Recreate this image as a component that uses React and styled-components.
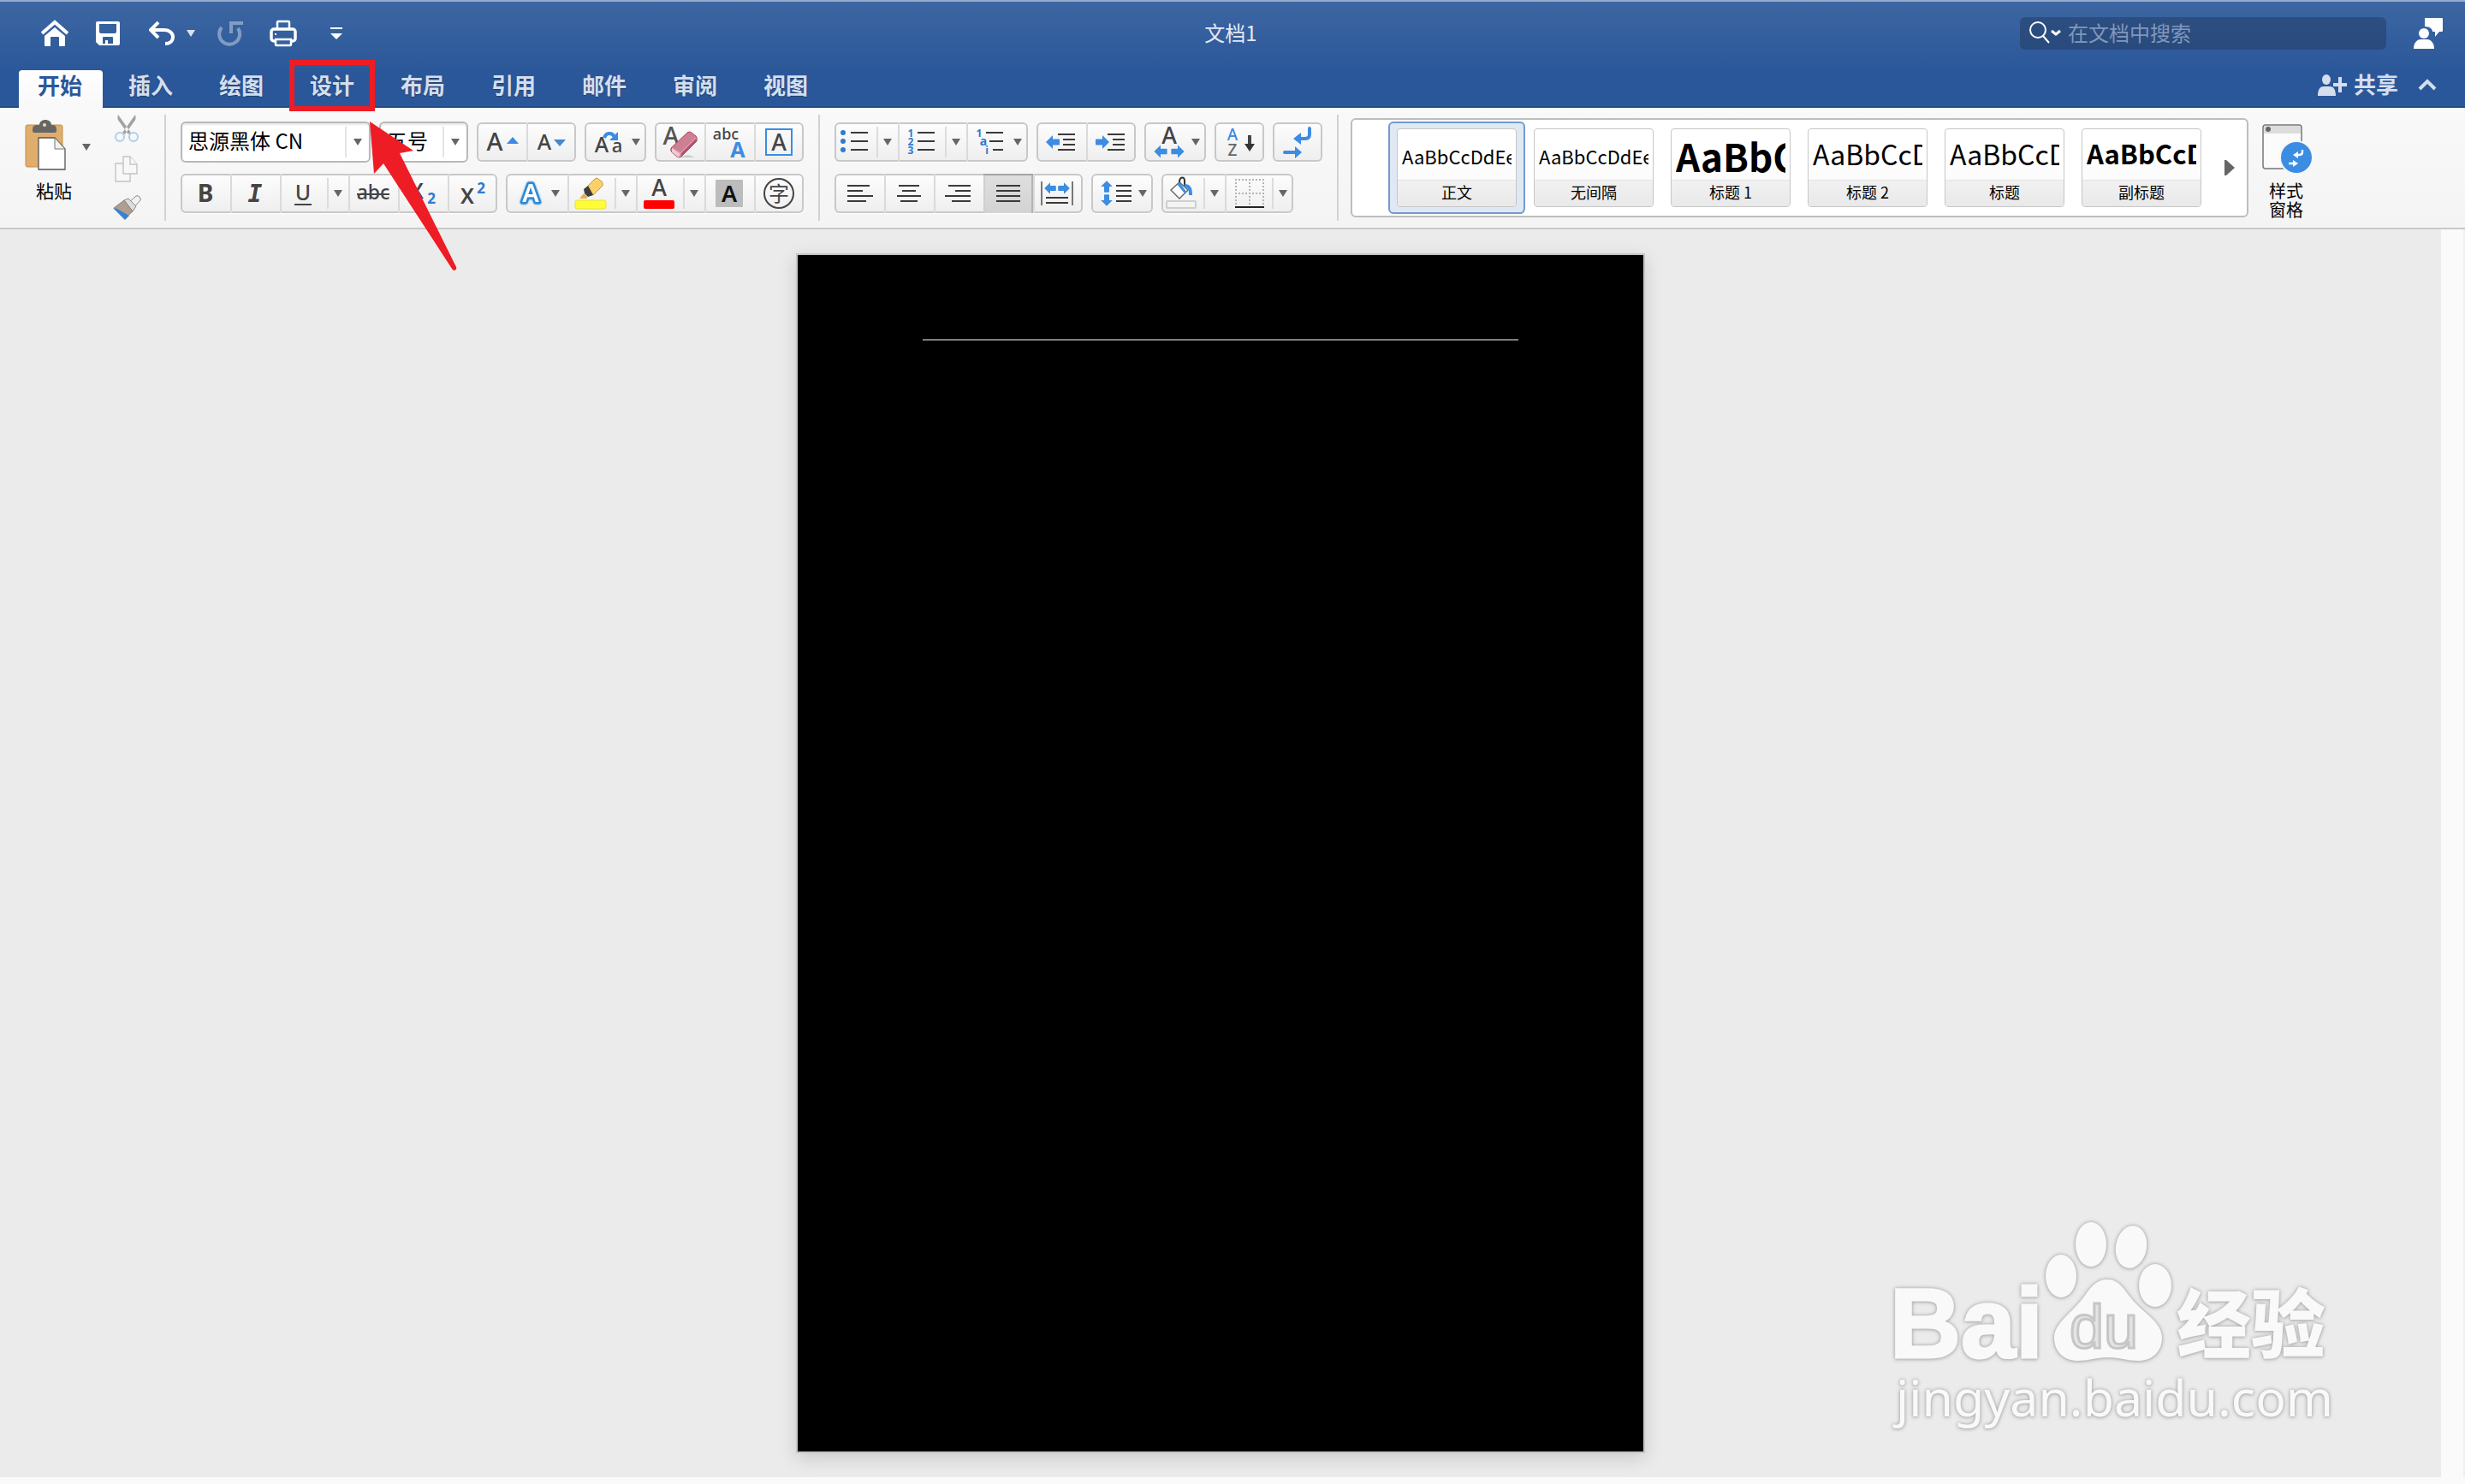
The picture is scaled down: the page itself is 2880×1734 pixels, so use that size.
import React, { useState } from 'react';
import styled, { createGlobalStyle, css } from 'styled-components';

const BLUE = '#3c8ce2';
const INK = '#444';

const GlobalStyle = createGlobalStyle`
  * {
    box-sizing: border-box;
  }

  body {
    margin: 0;
    font-family: "Noto Sans CJK SC", sans-serif;
    color: #000;
  }

  button, input, select {
    margin: 0;
    padding: 0;
    border: 0;
    background: none;
    font: inherit;
    color: inherit;
  }

  svg {
    display: block;
    flex: none;
  }
`;

const AppWrapper = styled.div`
  position: relative;
  display: flex;
  flex-direction: column;
  min-height: 100vh;
  overflow: hidden;
  background: #fafafa;
`;

const Header = styled.header`
  height: 126px;
  background: linear-gradient(#3d66a2, #2a5799 70%);
  border-top: 2px solid #96abcd;
  border-bottom: 2px solid #254b82;
`;

const TitleBar = styled.div`
  display: grid;
  grid-template-columns: 1fr auto 1fr;
  align-items: center;
  height: 78px;
  padding: 0 24px 4px 20px;

  .title {
    padding-bottom: 4px;
    font-size: 24px;
    color: #e2e8f3;
  }
`;

const QuickAccess = styled.div`
  display: flex;
  align-items: center;
  padding-left: 20px;
`;

const QuickButton = styled.button`
  display: flex;
  justify-content: center;
  align-items: center;
  width: ${(p) => p.$w}px;
  height: 48px;
  margin-right: ${(p) => p.$gap || 0}px;
  opacity: ${(p) => (p.disabled ? 0.38 : 1)};
`;

const TitleRight = styled.div`
  display: flex;
  justify-content: flex-end;
  align-items: center;
  gap: 30px;
`;

const SearchBox = styled.label`
  display: flex;
  align-items: center;
  width: 428px;
  height: 38px;
  padding-left: 10px;
  border-radius: 6px;
  background: linear-gradient(#2d4e80, #284a7d);

  input {
    flex: 1;
    min-width: 0;
    padding: 0 0 2px 8px;
    font-size: 24px;
    line-height: 34px;
    outline: none;
  }

  input::placeholder {
    color: #8197bb;
    opacity: 1;
  }
`;

const TabBar = styled.div`
  display: flex;
  height: 44px;
  padding: 0 32px 0 22px;
  margin-top: 2px;
`;

const Tabs = styled.nav`
  display: flex;
  gap: 8px;
`;

const TabSlot = styled.div`
  position: relative;
`;

const Tab = styled.button`
  width: 98px;
  height: 44px;
  padding: 0 2px 10px 0;
  border-radius: 4px 4px 0 0;
  font-size: 26px;
  line-height: 34px;
  font-weight: 700;
  color: #d4deed;
  text-shadow: 0 1px 1px rgba(0, 0, 0, .3);

  ${(p) => p.$active && css`
    background: linear-gradient(#fff, #f8f8f8);
    color: #2b579a;
    text-shadow: none;
  `}
`;

const Callout = styled.div`
  position: absolute;
  z-index: 2;
  top: -12px;
  left: -2px;
  width: 100px;
  height: 60px;
  border: 6px solid #ee1c24;
  pointer-events: none;

  svg {
    position: absolute;
    top: 66px;
    left: 88px;
  }
`;

const TabActions = styled.div`
  display: flex;
  align-items: center;
  gap: 22px;
  margin-left: auto;
  padding-bottom: 10px;
  color: #d4deed;
`;

const ShareButton = styled.button`
  display: flex;
  align-items: center;
  gap: 8px;
  font-size: 26px;
  line-height: 34px;
  font-weight: 700;

  span {
    padding-bottom: 2px;
  }
`;

const Ribbon = styled.section`
  display: flex;
  height: 142px;
  padding: 8px 0;
  background: linear-gradient(#f9f9f9, #f4f4f4);
  border-bottom: 2px solid #c9c9c9;
`;

const Divider = styled.div`
  width: 2px;
  height: 124px;
  background: #d2d2d2;
`;

const Clipboard = styled.div`
  display: flex;
  width: 192px;
  padding-left: 28px;

  .paste {
    display: flex;
    flex-direction: column;
    align-items: center;
    gap: 2px;
    width: 80px;
    padding: 4px 0 0;
    align-self: flex-start;
    font-size: 21px;
    line-height: 36px;
  }

  .paste span {
    align-self: flex-start;
    margin-left: 14px;
  }

  .side {
    display: flex;
    flex-direction: column;
    justify-content: space-between;
    align-items: center;
    width: 36px;
    margin-left: 22px;
  }
`;

const Section = styled.div`
  display: flex;
  flex-direction: column;
  gap: 13px;
  padding: 8px 17px 0;
`;

const Row = styled.div`
  display: flex;
  align-items: center;
  gap: 10px;
  height: ${(p) => p.$h || 46}px;
`;

const Group = styled.div`
  display: flex;
  height: 46px;
  border-radius: 6px;
  background: linear-gradient(#fdfdfd, #eee);
  box-shadow: inset 0 0 0 2px #c8c8c8, 0 1px 1px #fff;
`;

const Tool = styled.button`
  width: ${(p) => p.$w}px;
  height: 46px;

  & + & {
    box-shadow: inset 2px 0 0 #dadada;
  }

  && {
    ${(p) => p.$active && css`
      background: linear-gradient(#dfdfdf, #d3d3d3);
      box-shadow: inset 0 2px 0 #a3a3a3, inset -2px 0 0 #b4b4b4, inset 2px 0 0 #cfcfcf;
    `}
  }
`;

const Combo = styled.div`
  display: grid;
  width: ${(p) => p.$w}px;
  height: 48px;
  border: 2px solid #b9b9b9;
  border-radius: 6px;
  background: #fff;
  box-shadow: inset 0 2px 2px #e8e8e8;

  select, svg {
    grid-area: 1 / 1;
  }

  select {
    width: 100%;
    height: 44px;
    padding: 0 0 6px 7px;
    appearance: none;
    outline: none;
    font-size: 24px;
  }

  svg {
    justify-self: end;
    pointer-events: none;
  }
`;

const Gallery = styled.div`
  display: flex;
  align-items: center;
  height: 116px;
  margin: 4px 12px 0 14px;
  padding-left: 42px;
  border: 2px solid #bdbdbd;
  border-radius: 6px;
  background: #fff;

  .next {
    width: 43px;
    height: 108px;
    padding-left: 17px;
  }
`;

const StyleItem = styled.button`
  width: 160px;
  height: 108px;
  padding: 6px 8px;
  border: 2px solid ${(p) => (p.$active ? '#7399ce' : 'transparent')};
  border-radius: 6px;
  background: ${(p) => (p.$active ? '#dfe8f3' : 'none')};
`;

const StyleCard = styled.span`
  display: flex;
  flex-direction: column;
  height: 92px;
  border: 1px solid #c6c6c6;
  border-radius: 4px;
  background: linear-gradient(#fff, #fff 30%, #f8f8f8);
  overflow: hidden;

  .preview {
    height: 60px;
    margin: 0 5px;
    overflow: hidden;
    text-align: left;
    white-space: nowrap;
    font-size: ${(p) => p.$size}px;
    font-weight: ${(p) => p.$weight};
    line-height: ${(p) => p.$line}px;
  }

  .name {
    height: 31px;
    border-top: 1px solid #e4e4e4;
    background: linear-gradient(#f1f1f1, #e9e9e9);
    font-size: 18px;
    line-height: 26px;
  }
`;

const PaneButton = styled.button`
  display: flex;
  flex-direction: column;
  align-items: center;
  align-self: flex-start;
  gap: 8px;
  width: 64px;
  padding-top: 10px;
  font-size: 20px;
  line-height: 22px;
`;

const Workspace = styled.main`
  display: flex;
  flex: 1;
  margin-bottom: 8px;

  .canvas {
    display: flex;
    flex: 1;
    justify-content: center;
    align-items: flex-start;
    padding: 28px 0;
    background: #ebebeb;
  }

  .track {
    width: 28px;
    border-right: 2px solid #efefef;
    background: #fafafa;
  }
`;

const Sheet = styled.article`
  width: 992px;
  height: 1402px;
  padding: 98px 146px;
  border: 2px solid #c6c6c6;
  background: #000;
  box-shadow: 0 6px 20px rgba(0, 0, 0, .14);

  hr {
    height: 2px;
    margin: 0;
    border: 0;
    background: #7f7f7f;
  }
`;

const Watermark = styled.svg`
  position: absolute;
  right: 150px;
  bottom: 44px;
  pointer-events: none;
  filter: drop-shadow(0 0 2px #a8a8a8) drop-shadow(0 1px 1px #c8c8c8);
`;

// Drawn on a canvas of the same size as its button, so the letters sit on a common grid
const Art = ({ w = 58, h = 46, children }) => (
  <svg width={w} height={h} viewBox={`0 0 ${w} ${h}`} aria-hidden="true">{children}</svg>
);

const Ch = ({ x, y, size = 27, fill = INK, weight = 500, family = 'Noto Sans', anchor = 'middle', ...rest }) => (
  <text x={x} y={y} fontSize={size} fill={fill} fontWeight={weight} fontFamily={`"${family}", "Noto Sans CJK SC", sans-serif`} textAnchor={anchor} {...rest} />
);

const Caret = ({ x, y = 19, fill = '#666' }) => <path d={`M${x - 5} ${y}h10l-5 8z`} fill={fill} />;

const Split = ({ x }) => <path d={`M${x + 1} 5v36`} stroke="#dcdcdc" strokeWidth="2" />;

const Lines = ({ rows }) => (
  <g stroke="#3a3a3a" strokeWidth="2">
    {rows.map(([a, b, y]) => <path key={y} d={`M${a} ${y}H${b}`} />)}
  </g>
);

const BlockArrow = ({ x, y, turn = 0, s = 1 }) => (
  <path
    d="M-8 0L0 -8V-3.5H7Q8 -3.5 8 -2.5V2.5Q8 3.5 7 3.5H0V8Z"
    transform={`translate(${x} ${y}) rotate(${turn}) scale(${s})`}
    fill={BLUE}
  />
);

const fontSizeTools = [
  { label: '增大字号', w: 58, art: <><Ch x={21} y={33} size={29}>A</Ch><path d="M35 25l7-8 7 8z" fill={BLUE} /></> },
  { label: '减小字号', w: 58, art: <><Ch x={21} y={32} size={25}>A</Ch><path d="M32 20h14l-7 8z" fill="#4b86cf" /></> },
];

const caseTools = [
  {
    label: '更改大小写',
    w: 72,
    art: (
      <>
        <Ch x={20} y={35} size={25}>A</Ch>
        <Ch x={38} y={35} size={22}>a</Ch>
        <path d="M23 18c2-6 9-7 12-1" fill="none" stroke={BLUE} strokeWidth="4" />
        <path d="M39 11v10H29z" fill={BLUE} />
        <Caret x={60} />
      </>
    ),
  },
];

const clearTools = [
  {
    label: '清除格式',
    w: 58,
    art: (
      <>
        <Ch x={19} y={26} size={29} fill="#555">A</Ch>
        <path d="M26 41h21l-8-3z" fill="#ccc" />
        <path d="M19 30L38 12q2-2 5 0l5 4q2 2 1 6L31 40q-3 2-5 0l-6-5q-2-2-1-5z" fill="#cf7f93" stroke="#a8485f" />
        <path d="M20 30l10 7-2 4-8-6z" fill="#eccad2" />
        <path d="M31 36L48 19v4L31 40z" fill="#b5546c" />
        <path d="M20 30l10 6 18-18" fill="none" stroke="#e6b2bf" />
      </>
    ),
  },
  { label: '拼音指南', w: 58, art: <><Ch x={25} y={20} size={18}>abc</Ch><Ch x={39} y={41} size={25} weight={700} fill={BLUE}>A</Ch></> },
  { label: '字符边框', w: 58, art: <><rect x="14" y="8" width="30" height="30" fill="none" stroke={BLUE} strokeWidth="2" /><Ch x={29} y={33}>A</Ch></> },
];

const styleTools = [
  { label: '加粗', w: 58, art: <Ch x={29} y={33} size={28} weight={700}>B</Ch> },
  { label: '倾斜', w: 58, art: <Ch x={29} y={33} size={28} family="DejaVu Sans Mono" fontStyle="italic" weight={700}>I</Ch> },
  { label: '下划线', w: 80, art: <><Ch x={27} y={31} size={25}>U</Ch><path d="M17 36h20" stroke={INK} strokeWidth="2" /><Split x={55} /><Caret x={68} /></> },
  { label: '删除线', w: 58, art: <><Ch x={29} y={30} size={23}>abc</Ch><path d="M10 24h38" stroke={INK} strokeWidth="2" /></> },
  { label: '下标', w: 58, art: <><Ch x={22} y={29} size={25} weight={600}>X</Ch><Ch x={39} y={35} size={17} weight={700} fill="#2b7cd3">2</Ch></> },
  { label: '上标', w: 58, art: <><Ch x={23} y={35} size={25} weight={600}>X</Ch><Ch x={39} y={23} size={17} weight={700} fill="#2b7cd3">2</Ch></> },
];

const colorTools = [
  {
    label: '文本效果',
    w: 72,
    art: (
      <>
        <g style={{ filter: 'drop-shadow(0 0 1px #2b8ad6)' }}>
          <Ch x={29} y={33} size={29} weight={600} fill="#fff" stroke="#2b8ad6" strokeWidth="5" strokeLinejoin="round" paintOrder="stroke">A</Ch>
        </g>
        <Caret x={58} />
      </>
    ),
  },
  {
    label: '突出显示',
    w: 80,
    art: (
      <>
        <path d="M24 14l8-8q2-2 4 0l4 3q2 2 1 5L30 25z" fill="#fdd169" stroke="#c79a3a" />
        <path d="M24 14l-5 4 1 5 4 4 6-2z" fill="#3d3d3d" />
        <path d="M19 23l-5 6h8l2-2z" fill="#e6b34a" />
        <rect x="9" y="31" width="36" height="10" rx="2" fill="#fffd38" stroke="#e5e035" />
        <Split x={55} />
        <Caret x={68} />
      </>
    ),
  },
  { label: '字体颜色', w: 80, art: <><Ch x={27} y={26}>A</Ch><rect x="9" y="31" width="36" height="10" rx="2" fill="#f00" /><Split x={55} /><Caret x={68} /></> },
  { label: '字符底纹', w: 58, art: <><rect x="13" y="7" width="32" height="32" rx="1" fill="#bcbcbc" /><Ch x={29} y={33} weight={600} fill="#111">A</Ch></> },
  { label: '带圈字符', w: 58, art: <><circle cx="29" cy="23" r="17" fill="none" stroke={INK} strokeWidth="2" /><Ch x={29} y={32} size={24} family="Noto Sans CJK SC" weight={400}>字</Ch></> },
];

const listTools = [
  {
    label: '项目符号',
    w: 74,
    art: (
      <>
        {[12, 22, 32].map((y) => <circle key={y} cx="10" cy={y} r="3" fill="#2b7cd3" />)}
        <Lines rows={[[19, 39, 12], [19, 39, 22], [19, 39, 32]]} />
        <Split x={49} />
        <Caret x={62} />
      </>
    ),
  },
  {
    label: '编号',
    w: 80,
    art: (
      <>
        {[1, 2, 3].map((n) => <Ch key={n} x={15} y={7 + n * 10} size={12} weight={700} fill="#2b7cd3">{n}</Ch>)}
        <Lines rows={[[23, 43, 12], [23, 43, 22], [23, 43, 32]]} />
        <Split x={55} />
        <Caret x={68} />
      </>
    ),
  },
  {
    label: '多级列表',
    w: 72,
    art: (
      <>
        <Ch x={15} y={17} size={12} weight={700} fill="#2b7cd3">1</Ch>
        <Ch x={20} y={27} size={14} weight={700} fill="#2b7cd3">a</Ch>
        <Ch x={24} y={37} size={12} weight={700} fill="#2b7cd3">i</Ch>
        <Lines rows={[[23, 43, 12], [27, 43, 22], [31, 43, 32]]} />
        <Caret x={60} />
      </>
    ),
  },
];

const indentTools = [
  { label: '减少缩进', w: 58, art: <><Lines rows={[[25, 45, 14], [31, 45, 20], [31, 45, 26], [25, 45, 32]]} /><BlockArrow x={19} y={23} /></> },
  { label: '增加缩进', w: 58, art: <><Lines rows={[[25, 45, 14], [31, 45, 20], [31, 45, 26], [25, 45, 32]]} /><BlockArrow x={19} y={23} turn={180} /></> },
];

const asianTools = [
  { label: '中文版式', w: 72, art: <><Ch x={29} y={25}>A</Ch><BlockArrow x={19} y={34} s={0.95} /><BlockArrow x={39} y={34} s={0.95} turn={180} /><Caret x={60} /></> },
];

const sortTools = [
  { label: '排序', w: 58, art: <><Ch x={21} y={21} size={19} fill={BLUE}>A</Ch><Ch x={21} y={39} size={19} fill="#666">Z</Ch><path d="M41 15v14" stroke={INK} strokeWidth="4" /><path d="M35 25h12l-6 9z" fill="#333" /></> },
];

const markTools = [
  {
    label: '显示编辑标记',
    w: 58,
    art: (
      <>
        <path d="M43 7v7q0 5-5 5h-8M14 35h14" fill="none" stroke={BLUE} strokeWidth="4" strokeLinecap="round" />
        <path d="M24 19l9-7v14zM34 35l-8-7v14z" fill={BLUE} />
      </>
    ),
  },
];

const alignTools = [
  { label: '左对齐', w: 58, art: <Lines rows={[[15, 41, 14], [15, 33, 20], [15, 45, 26], [15, 37, 32]]} /> },
  { label: '居中', w: 58, art: <Lines rows={[[17, 41, 14], [21, 37, 20], [15, 43, 26], [19, 39, 32]]} /> },
  { label: '右对齐', w: 58, art: <Lines rows={[[17, 43, 14], [25, 43, 20], [13, 43, 26], [21, 43, 32]]} /> },
  { label: '两端对齐', w: 58, active: true, art: <Lines rows={[[15, 43, 14], [15, 43, 20], [15, 43, 26], [15, 43, 32]]} /> },
  {
    label: '分散对齐',
    w: 58,
    art: (
      <>
        <path d="M10 9v28M46 9v28" stroke="#777" strokeWidth="2" />
        <BlockArrow x={20} y={17} s={0.85} />
        <BlockArrow x={36} y={17} s={0.85} turn={180} />
        <Lines rows={[[15, 41, 28], [15, 41, 34]]} />
      </>
    ),
  },
];

const spacingTools = [
  {
    label: '行距',
    w: 72,
    art: (
      <>
        <BlockArrow x={18} y={15} s={0.85} turn={90} />
        <BlockArrow x={18} y={31} s={0.85} turn={270} />
        <Lines rows={[[29, 47, 14], [29, 47, 20], [29, 47, 26], [29, 47, 32]]} />
        <Caret x={60} />
      </>
    ),
  },
];

const borderTools = [
  {
    label: '底纹',
    w: 74,
    art: (
      <>
        <path d="M11 19l10-9 10 9-10 10z" fill="#fff" stroke="#666" strokeWidth="1.4" />
        <path d="M18 12l9 11 2-2-8-11z" fill={BLUE} />
        <path d="M21 10c0-7 6-7 6-2v6" fill="none" stroke="#333" strokeWidth="2" />
        <path d="M27 14c6 0 7 4 7 11" fill="none" stroke={BLUE} strokeWidth="4" />
        <rect x="6" y="32" width="34" height="8" rx="1" fill="#f4f4f4" stroke="#cfcfcf" strokeWidth="2" />
        <Split x={49} />
        <Caret x={62} />
      </>
    ),
  },
  {
    label: '边框',
    w: 80,
    art: (
      <>
        <path d="M12 7h34M12 23h34M13 6v30M29 6v30M45 6v30" stroke="#b5b5b5" strokeWidth="2" strokeDasharray="2 2" />
        <path d="M12 39h34" stroke="#222" strokeWidth="2" />
        <Split x={55} />
        <Caret x={68} />
      </>
    ),
  },
];

const ToolGroup = ({ tools }) => (
  <Group>
    {tools.map(({ label, w, active, art }) => (
      <Tool key={label} $w={w} $active={active} aria-label={label}>
        <Art w={w}>{art}</Art>
      </Tool>
    ))}
  </Group>
);

const Picker = ({ label, width, options }) => (
  <Combo $w={width}>
    <select aria-label={label}>
      {options.map((option) => <option key={option}>{option}</option>)}
    </select>
    <Art w={28} h={44}>
      <path d="M1 4v36" stroke="#e4e4e4" strokeWidth="2" />
      <Caret x={15} y={18} />
    </Art>
  </Combo>
);

const tabs = ['开始', '插入', '绘图', '设计', '布局', '引用', '邮件', '审阅', '视图'];

const textStyles = [
  { name: '正文', size: 22, weight: 400, line: 62 },
  { name: '无间隔', size: 22, weight: 400, line: 62 },
  { name: '标题 1', size: 44, weight: 700, line: 62 },
  { name: '标题 2', size: 32, weight: 400, line: 56 },
  { name: '标题', size: 32, weight: 400, line: 56 },
  { name: '副标题', size: 31, weight: 700, line: 56 },
];

const TopBar = () => (
  <TitleBar>
    <QuickAccess>
      <QuickButton $w={48} $gap={14} aria-label="主页">
        <Art w={32} h={32}>
          <path d="M1 16L16 3l15 13" fill="none" stroke="#fff" strokeWidth="4" />
          <path d="M4 19L16 9l12 10v11q0 1-1 1h-6V21q0-1-1-1h-8q-1 0-1 1v10H5q-1 0-1-1z" fill="#fff" />
        </Art>
      </QuickButton>
      <QuickButton $w={48} $gap={14} aria-label="保存">
        <Art w={28} h={28}>
          <path fillRule="evenodd" d="M2 0h24q2 0 2 2v24q0 2-2 2H4l-4-4V2q0-2 2-2zM4 3v9q0 2 2 2h16q2 0 2-2V3zM8 19q0-1 1-1h10q1 0 1 1v7h-6v-4h-3v4H8z" fill="#fff" />
        </Art>
      </QuickButton>
      <QuickButton $w={50} aria-label="撤消">
        <Art w={30} h={28}>
          <path d="M11 1L2 10l9 9M3 10h15c6 0 10 4 10 8 0 5-4 8-9 8" fill="none" stroke="#fff" strokeWidth="4" />
        </Art>
      </QuickButton>
      <QuickButton $w={18} $gap={14} aria-label="撤消选项">
        <Art w={10} h={8}><Caret x={5} y={0} fill="#dbe3f0" /></Art>
      </QuickButton>
      <QuickButton $w={46} $gap={14} disabled aria-label="恢复">
        <Art w={30} h={30}>
          <path d="M5 8a12 12 0 1 0 19 1M16 15V3h14" fill="none" stroke="#fff" strokeWidth="4" />
        </Art>
      </QuickButton>
      <QuickButton $w={50} $gap={20} aria-label="打印">
        <Art w={32} h={32}>
          <g fill="none" stroke="#fff" strokeWidth="2.5">
            <path d="M9 10V3q0-1 1-1h12q1 0 1 1v7" />
            <rect x="2" y="11" width="28" height="14" rx="3" strokeWidth="3.5" />
            <path d="M7 23h18v6q0 1-1 1H8q-1 0-1-1z" fill="#34609f" />
          </g>
          <path d="M6 16h2v2H6z" fill="#fff" />
        </Art>
      </QuickButton>
      <QuickButton $w={34} aria-label="自定义快速访问工具栏">
        <Art w={14} h={14}><path d="M0 0h14v2H0zM0 7h14l-7 7z" fill="#fff" /></Art>
      </QuickButton>
    </QuickAccess>
    <div className="title">文档1</div>
    <TitleRight>
      <SearchBox>
        <Art w={38} h={34}>
          <g fill="none" stroke="#fff" strokeWidth="2">
            <circle cx="11" cy="13" r="9" />
            <path d="M17 20l7 8" />
            <path d="M27 14l5 4 5-4" strokeWidth="3" />
          </g>
        </Art>
        <input type="search" placeholder="在文档中搜索" aria-label="在文档中搜索" />
      </SearchBox>
      <QuickButton $w={38} aria-label="反馈">
        <Art w={36} h={36}>
          <path d="M14 0h20q1 0 1 1v14q0 1-1 1h-3l-5 6v-6h-3c0-3-3-6-9-6V1q0-1 0-1z" fill="#fff" />
          <ellipse cx="13" cy="18" rx="6" ry="6" fill="#fff" />
          <path d="M1 36c0-7 4-11 8-11h8c4 0 8 4 8 11z" fill="#fff" />
        </Art>
      </QuickButton>
    </TitleRight>
  </TitleBar>
);

const PointerArrow = () => (
  <svg width="104" height="176" viewBox="0 0 104 176" aria-hidden="true">
    <path d="M0 0L51 34L35 37L101 170Q102 173 99 174Q97 174 96 172L16 49L5 61Z" fill="#ee1c24" />
  </svg>
);

const ClipboardSection = () => (
  <Clipboard>
    <button className="paste">
      <Art w={80} h={64}>
        <rect x="2" y="8" width="43" height="49" rx="2" fill="#e0ae6c" stroke="#c58f4b" />
        <path d="M10 13q0-5 6-5h2c0-8 14-8 14 0h1q5 0 5 5v2q0 2-2 2H12q-2 0-2-2z" fill="#666" />
        <circle cx="24" cy="8" r="2" fill="#f5d9ae" />
        <path d="M17 23h19l12 13v24H17z" fill="#fff" stroke="#555" strokeWidth="1.3" />
        <path d="M36 23v13h12z" fill="#f1f1f1" stroke="#777" />
        <Caret x={73} y={30} />
      </Art>
      <span>粘贴</span>
    </button>
    <div className="side">
      <button aria-label="剪切">
        <Art w={32} h={34}>
          <path d="M6 0q-2 5 2 9l10 14 3-2zM26 0q2 5-2 9L14 23l-3-2z" fill="#a2a2a2" />
          <g fill="none" stroke="#afcdec" strokeWidth="2">
            <circle cx="8" cy="26" r="5" />
            <circle cx="24" cy="26" r="5" />
          </g>
        </Art>
      </button>
      <button aria-label="复制">
        <Art w={28} h={32}>
          <g fill="#f8f8f8" stroke="#c4c4c4" strokeWidth="1.4">
            <path d="M1 9h17v21H1z" />
            <path d="M10 1h8l8 9v11H10z" />
            <path d="M18 1v9h8" />
          </g>
        </Art>
      </button>
      <button aria-label="格式刷">
        <Art w={34} h={30}>
          <path d="M19 9l9-8q2-1 4 1t1 4l-8 9z" fill="#f2f2f2" stroke="#888" />
          <path d="M14 6l5-2 9 9-4 6z" fill="#ddd" stroke="#888" />
          <path d="M14 6L2 15l13 12 9-8z" fill="#b09f8e" stroke="#8d8175" />
          <path d="M6 16l14 8-5 5L1 15z" fill="#3b80cc" />
        </Art>
      </button>
    </div>
  </Clipboard>
);

const StyleGallery = () => {
  const [selected, setSelected] = useState('正文');

  return (
    <Gallery>
      {textStyles.map(({ name, size, weight, line }) => (
        <StyleItem key={name} $active={name === selected} onClick={() => setSelected(name)}>
          <StyleCard $size={size} $weight={weight} $line={line}>
            <span className="preview">AaBbCcDdEe</span>
            <span className="name">{name}</span>
          </StyleCard>
        </StyleItem>
      ))}
      <button className="next" aria-label="更多样式">
        <Art w={12} h={18}><path d="M0 0h2l10 9-10 9H0z" fill="#666" /></Art>
      </button>
    </Gallery>
  );
};

const BaiduMark = () => (
  <Watermark width="530" height="270" viewBox="0 0 530 270" fill="#f9f9f9">
    <ellipse cx="208" cy="71" rx="18" ry="25" />
    <ellipse cx="243" cy="34" rx="18" ry="26" />
    <ellipse cx="290" cy="37" rx="18" ry="25" transform="rotate(10 290 37)" />
    <ellipse cx="318" cy="82" rx="19" ry="25" />
    <path d="M262 75C276 75 281 86 290 97C302 113 326 124 326 143C326 160 314 170 298 170C285 170 276 166 263 166C250 166 240 170 228 170C212 170 200 160 200 143C200 126 222 113 235 95C243 83 250 75 262 75Z" />
    <text x="8" y="166" fontSize="115" fontWeight="700" fontFamily='"Liberation Sans", sans-serif' stroke="#f9f9f9" strokeWidth="3">Bai</text>
    <text x="218" y="155" fontSize="72" fontFamily='"Liberation Sans", sans-serif' fill="#e4e4e4" stroke="#c6c6c6" strokeWidth="3">du</text>
    <text x="343" y="160" fontSize="87" fontWeight="900" fontFamily='"Noto Sans CJK SC", sans-serif'>经验</text>
    <text x="15" y="235" fontSize="59" fontFamily='"Noto Sans", sans-serif'>jingyan.baidu.com</text>
  </Watermark>
);

const App = () => (
  <AppWrapper>
    <GlobalStyle />
    <Header>
      <TopBar />
      <TabBar>
        <Tabs>
          {tabs.map((tab) => (
            <TabSlot key={tab}>
              <Tab $active={tab === '开始'}>{tab}</Tab>
              {tab === '设计' && <Callout><PointerArrow /></Callout>}
            </TabSlot>
          ))}
        </Tabs>
        <TabActions>
          <ShareButton>
            <Art w={34} h={26}>
              <g fill="#d4deed">
                <ellipse cx="10" cy="7" rx="5" ry="6" />
                <path d="M0 26c0-8 3-11 7-11h7c4 0 7 3 7 11zM24 4h4v7h6v4h-6v7h-4v-7h-6v-4h6z" />
              </g>
            </Art>
            <span>共享</span>
          </ShareButton>
          <button aria-label="折叠功能区">
            <Art w={24} h={16}><path d="M3 13l9-9 9 9" fill="none" stroke="#d4deed" strokeWidth="4" /></Art>
          </button>
        </TabActions>
      </TabBar>
    </Header>
    <Ribbon>
      <ClipboardSection />
      <Divider />
      <Section>
        <Row $h={48}>
          <Picker label="字体" width={222} options={['思源黑体 CN', '宋体', '黑体']} />
          <Picker label="字号" width={104} options={['五号', '四号', '三号']} />
          <ToolGroup tools={fontSizeTools} />
          <ToolGroup tools={caseTools} />
          <ToolGroup tools={clearTools} />
        </Row>
        <Row>
          <ToolGroup tools={styleTools} />
          <ToolGroup tools={colorTools} />
        </Row>
      </Section>
      <Divider />
      <Section>
        <Row $h={48}>
          <ToolGroup tools={listTools} />
          <ToolGroup tools={indentTools} />
          <ToolGroup tools={asianTools} />
          <ToolGroup tools={sortTools} />
          <ToolGroup tools={markTools} />
        </Row>
        <Row>
          <ToolGroup tools={alignTools} />
          <ToolGroup tools={spacingTools} />
          <ToolGroup tools={borderTools} />
        </Row>
      </Section>
      <Divider />
      <StyleGallery />
      <PaneButton>
        <Art w={60} h={60}>
          <rect x="3" y="2" width="45" height="51" rx="3" fill="#fbfbfb" stroke="#777" strokeWidth="1.5" />
          <path d="M4 5q0-2 2-2h39q2 0 2 2v7H4z" fill="#dcdcdc" />
          <circle cx="9" cy="7" r="3" fill="#666" />
          <circle cx="42" cy="40" r="20" fill="#f6f6f6" />
          <circle cx="42" cy="40" r="18" fill={BLUE} />
          <path d="M49 31v3q0 3-4 3h-3M33 47h5" fill="none" stroke="#fff" strokeWidth="2.4" />
          <path d="M38 37l6-4v8zM44 47l-6-4v8z" fill="#fff" />
        </Art>
        <span>样式<br />窗格</span>
      </PaneButton>
    </Ribbon>
    <Workspace>
      <div className="canvas">
        <Sheet><hr /></Sheet>
      </div>
      <div className="track" />
    </Workspace>
    <BaiduMark />
  </AppWrapper>
);

export default App;
